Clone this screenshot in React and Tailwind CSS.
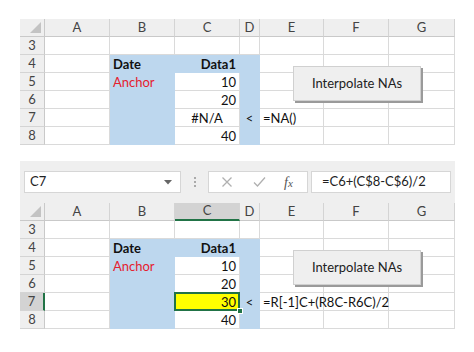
import React from "react";

const COLS = ["A", "B", "C", "D", "E", "F", "G"];
const GRID = "grid grid-cols-[25px_65px_65px_65px_20px_64px_65px_66px] auto-rows-[18px]";
const FONT = { fontFamily: "Lato, 'Open Sans', sans-serif" };

// row data: [A, B, C, D, E, F, G]
const topRows = [
  { n: 3, cells: ["", "", "", "", "", "", ""] },
  { n: 4, cells: ["", "Date", "Data1", "", "", "", ""] },
  { n: 5, cells: ["", "Anchor", "10", "", "", "", ""] },
  { n: 6, cells: ["", "", "20", "", "", "", ""] },
  { n: 7, cells: ["", "", "#N/A", "<", "=NA()", "", ""] },
  { n: 8, cells: ["", "", "40", "", "", "", ""] },
];

const bottomRows = topRows.map((r) =>
  r.n === 7 ? { n: 7, cells: ["", "", "30", "<", "=R[-1]C+(R8C-R6C)/2", "", ""] } : r
);

function isBlue(row, col) {
  if (row < 4) return false;
  if (col === 1 || col === 3) return true;
  if (col === 2 && row === 4) return true;
  return false;
}

function Cell({ row, col, value, selected }) {
  const blue = isBlue(row, col);
  let bg = "bg-white border-[#dadada]";
  if (blue) bg = "bg-[#bdd7ee] border-[#bdd7ee]";
  if (selected) bg = "bg-[#ffff00] border-[#dadada]";

  let align = "text-left";
  let color = "text-[#111]";
  let weight = "";
  if (value === "Date") weight = "font-bold";
  if (value === "Data1") {
    weight = "font-bold";
    align = "text-right";
  }
  if (value === "Anchor") color = "text-[#e5202e]";
  if (/^\d+$/.test(value)) align = "text-right";
  if (value === "#N/A" || value === "<") align = "text-center";

  return (
    <div
      className={`relative h-[18px] px-[3px] text-[13px] leading-[18px] whitespace-nowrap border-b border-r ${bg} ${align} ${color} ${weight}`}
    >
      <span className="relative z-10">{value}</span>
      {selected && (
        <>
          <div className="absolute -left-[1px] -top-[1px] -right-[1px] -bottom-[1px] border-2 border-[#217346] pointer-events-none" />
          <div className="absolute -right-[4px] -bottom-[4px] w-[6px] h-[6px] bg-[#217346] border border-white z-10" />
        </>
      )}
    </div>
  );
}

function Sheet({ rows, selected, active }) {
  return (
    <div className={`${GRID} relative`}>
      <div className="relative bg-[#efefef] border-r border-b border-[#c9c9c9]">
        <svg className="absolute right-[3px] bottom-[3px]" width="11" height="11" viewBox="0 0 11 11">
          <polygon points="11,0 11,11 0,11" fill="#c3c3c3" />
        </svg>
      </div>
      {COLS.map((c, i) => {
        const act = active && i === 2;
        return (
          <div
            key={c}
            className={`flex items-center justify-center text-[13px] text-[#444] border-r border-[#d4d4d4] ${
              act ? "bg-[#d3d3d3] border-b-2 border-b-[#217346]" : "bg-[#efefef] border-b border-b-[#c9c9c9]"
            }`}
          >
            {c}
          </div>
        );
      })}
      {rows.map((r) => (
        <React.Fragment key={r.n}>
          <div
            className={`flex items-center justify-center text-[13px] text-[#444] border-b border-[#d4d4d4] ${
              active && r.n === 7 ? "bg-[#d3d3d3] border-r-2 border-r-[#217346]" : "bg-[#efefef] border-r border-r-[#c9c9c9]"
            }`}
          >
            {r.n}
          </div>
          {r.cells.map((v, ci) => (
            <Cell key={ci} row={r.n} col={ci} value={v} selected={selected && r.n === 7 && ci === 2} />
          ))}
        </React.Fragment>
      ))}
    </div>
  );
}

function MacroButton({ top }) {
  return (
    <div
      className={`absolute ${top} left-[273px] z-20 w-[128px] h-[35px] flex items-center justify-center bg-[#efefef] border border-[#d0d0d0] shadow-[2px_2px_0_#9a9a9a] text-[13px] text-[#222]`}
    >
      Interpolate NAs
    </div>
  );
}

function FormulaBar() {
  return (
    <div className="h-[42px] bg-[#efefef] flex items-center px-[4px] mb-0">
      <div className="w-[157px] h-[22px] bg-white border border-[#d6d6d6] flex items-center justify-between px-[5px] text-[13px] text-[#222]">
        <span>C7</span>
        <svg width="8" height="5" viewBox="0 0 8 5" className="mr-[3px]">
          <polygon points="0,0 8,0 4,4.5" fill="#666" />
        </svg>
      </div>
      <div className="w-[27px] flex flex-col items-center justify-center gap-[2px]">
        <span className="w-[2px] h-[2px] bg-[#aaa]" />
        <span className="w-[2px] h-[2px] bg-[#aaa]" />
        <span className="w-[2px] h-[2px] bg-[#aaa]" />
      </div>
      <div className="w-[100px] h-[22px] bg-white border border-[#d6d6d6] flex items-center">
        <svg width="12" height="12" viewBox="0 0 12 12" className="ml-[12px]">
          <path d="M1.5 1.5 L10.5 10.5 M10.5 1.5 L1.5 10.5" stroke="#b0b0b0" strokeWidth="1.3" />
        </svg>
        <svg width="13" height="12" viewBox="0 0 13 12" className="ml-[20px]">
          <path d="M1 6.5 L4.5 10 L12 1.5" stroke="#b0b0b0" strokeWidth="1.3" fill="none" />
        </svg>
        <span
          className="ml-[18px] text-[14px] italic text-[#555]"
          style={{ fontFamily: "'Liberation Serif', serif" }}
        >
          f<span className="text-[11px]">x</span>
        </span>
      </div>
      <div className="flex-1 h-[22px] ml-[3px] bg-white border border-[#d6d6d6] flex items-center pl-[10px] text-[13px] text-[#222]">
        =C6+(C$8-C$6)/2
      </div>
    </div>
  );
}

export default function App() {
  return (
    <div className="w-[474px] h-[352px] bg-white pt-[19px] pl-[20px]" style={FONT}>
      <div className="w-[435px] relative">
        <Sheet rows={topRows} />
        <MacroButton top="top-[47px]" />
      </div>
      <div className="w-[435px] mt-[16px]">
        <FormulaBar />
        <div className="relative">
          <Sheet rows={bottomRows} selected active />
          <MacroButton top="top-[47px]" />
        </div>
      </div>
    </div>
  );
}
